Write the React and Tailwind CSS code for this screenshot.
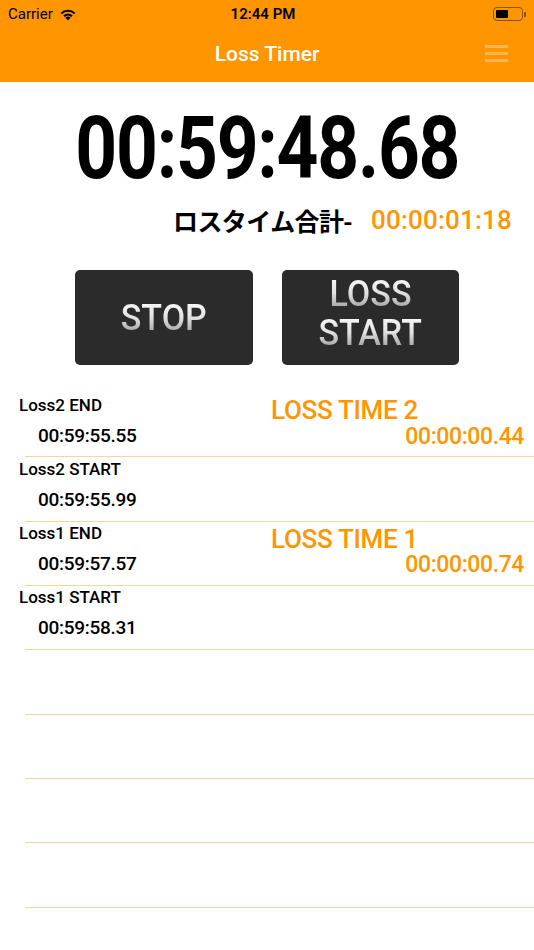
import React from "react";

const ORANGE = "text-[#ff9500]";

function Wifi() {
  return (
    <svg width="18" height="13" viewBox="0 0 18 13" className="ml-[6px]">
      <path d="M9 12.5 L6.4 9.6 A3.8 3.8 0 0 1 11.6 9.6 Z" fill="#000" />
      <path d="M4.3 7.5 A6.8 6.8 0 0 1 13.7 7.5 L12.3 9 A4.8 4.8 0 0 0 5.7 9 Z" fill="#000" />
      <path d="M1.6 4.7 A10.6 10.6 0 0 1 16.4 4.7 L15 6.2 A8.6 8.6 0 0 0 3 6.2 Z" fill="#000" />
    </svg>
  );
}

function Battery() {
  return (
    <div className="flex items-center">
      <div className="w-[30px] h-[14px] rounded-[4px] border border-[#8a5200] p-[2px] flex">
        <div className="w-[12px] h-full bg-black rounded-[1px]" />
      </div>
      <div className="w-[2px] h-[5px] bg-[#8a5200] rounded-r-[1px] ml-[1px]" />
    </div>
  );
}

const rows = [
  { label: "Loss2 END", time: "00:59:55.55", lossTitle: "LOSS TIME 2", loss: "00:00:00.44" },
  { label: "Loss2 START", time: "00:59:55.99" },
  { label: "Loss1 END", time: "00:59:57.57", lossTitle: "LOSS TIME 1", loss: "00:00:00.74" },
  { label: "Loss1 START", time: "00:59:58.31" },
  {},
  {},
  {},
  {},
];

const btnText =
  "text-[37px] font-medium bg-linear-to-b from-white via-[#e0e0e0] to-[#8f8f8f] bg-clip-text text-transparent scale-x-[0.92] inline-block";

export default function App() {
  return (
    <div className="w-[534px] h-[950px] bg-white overflow-hidden font-['Roboto','Noto_Sans',sans-serif] text-black">
      <header className="bg-[#ff9500] h-[82px] flex flex-col">
        <div className="h-[28px] flex items-center px-[8px]">
          <div className="w-[150px] flex items-center text-[15px] leading-none">
            <span>Carrier</span>
            <Wifi />
          </div>
          <div className="flex-1 text-center text-[15px] font-semibold leading-none pr-[8px]">12:44 PM</div>
          <div className="w-[150px] flex justify-end">
            <Battery />
          </div>
        </div>
        <div className="flex-1 flex items-center relative">
          <div className="flex-1 text-center text-white text-[21px] font-medium leading-none pb-[1px]">Loss Timer</div>
          <div className="absolute right-[26px] top-[17px] flex flex-col gap-[4px]">
            <div className="w-[23px] h-[3px] bg-white/30" />
            <div className="w-[23px] h-[3px] bg-white/30" />
            <div className="w-[23px] h-[3px] bg-white/30" />
          </div>
        </div>
      </header>

      <main className="flex flex-col">
        <div className="mt-[22px] h-[88px] flex justify-center">
          <span className="inline-block text-[88px] leading-[88px] font-bold tracking-[-1.5px] scale-x-[0.83] whitespace-nowrap">
            00:59:48.68
          </span>
        </div>

        <div className="mt-[12px] h-[32px] flex items-center justify-end pr-[22px] gap-[19px]">
          <span className="text-[25px] font-bold leading-none font-['Noto_Sans_CJK_JP',sans-serif] tracking-[-0.6px]">
            ロスタイム合計-
          </span>
          <span className={`${ORANGE} text-[26px] font-medium leading-none tracking-[0.2px]`}>00:00:01:18</span>
        </div>

        <div className="mt-[34px] flex justify-center gap-[29px]">
          <button className="w-[178px] h-[95px] rounded-[5px] bg-[#2b2b2b] flex items-center justify-center">
            <span className={`${btnText} leading-[40px]`}>STOP</span>
          </button>
          <button className="w-[177px] h-[95px] rounded-[5px] bg-[#2b2b2b] flex flex-col items-center justify-center">
            <span className={`${btnText} leading-[39px] -mt-[9px]`}>LOSS</span>
            <span className={`${btnText} leading-[39px]`}>START</span>
          </button>
        </div>

        <div className="mt-[28px] flex flex-col">
          {rows.map((r, i) => (
            <div key={i} className="h-[64.33px] flex flex-col">
              <div className="flex-1 flex">
                <div className="w-[271px] flex flex-col pl-[19px]">
                  <div className="h-[24px] flex items-center text-[17px] font-medium leading-none whitespace-nowrap">
                    {r.label || ""}
                  </div>
                  <div className="h-[32px] mt-[2px] pl-[19px] flex items-center text-[19px] font-medium leading-none tracking-[-0.3px] whitespace-nowrap">
                    {r.time || ""}
                  </div>
                </div>
                <div className="flex-1 flex flex-col pr-[10px]">
                  <div className={`${ORANGE} h-[34px] flex items-center text-[26px] font-medium leading-none whitespace-nowrap tracking-[-0.3px]`}>
                    {r.lossTitle || ""}
                  </div>
                  <div className={`${ORANGE} h-[18px] flex items-center justify-end text-[23px] font-medium leading-none whitespace-nowrap tracking-[-0.4px]`}>
                    {r.loss || ""}
                  </div>
                </div>
              </div>
              <div className="ml-[25px] h-px bg-[#fcd39a]" />
            </div>
          ))}
        </div>
      </main>
    </div>
  );
}
